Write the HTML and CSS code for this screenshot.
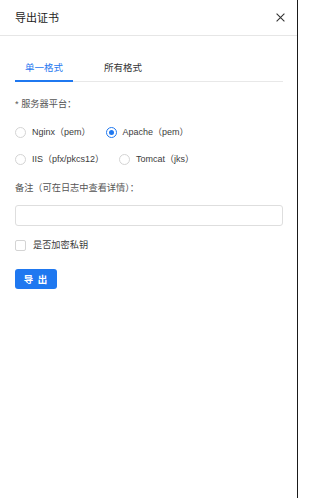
FILE: index.html
```html
<!DOCTYPE html>
<html lang="zh-CN">
<head>
<meta charset="utf-8">
<title>导出证书</title>
<link rel="stylesheet" href="styles.css">
</head>
<body>
<div class="panel">
  <header class="head">
    <span class="title">导出证书</span>
    <span class="close" aria-label="关闭">
      <svg width="9" height="9" viewBox="0 0 9 9"><path d="M0.6 0.6 L8.4 8.4 M8.4 0.6 L0.6 8.4" stroke="#333" stroke-width="1.1" fill="none"/></svg>
    </span>
  </header>
  <div class="body">
    <nav class="tabs">
      <span class="tab active">单一格式</span>
      <span class="tab">所有格式</span>
    </nav>
    <div class="label">* 服务器平台：</div>
    <div class="radios">
      <div class="row">
        <label class="radio"><span class="dot"></span><span>Nginx（pem）</span></label>
        <label class="radio"><span class="dot on"></span><span>Apache（pem）</span></label>
      </div>
      <div class="row">
        <label class="radio"><span class="dot"></span><span>IIS（pfx/pkcs12）</span></label>
        <label class="radio"><span class="dot"></span><span>Tomcat（jks）</span></label>
      </div>
    </div>
    <div class="label note">备注（可在日志中查看详情）：</div>
    <div class="input"></div>
    <label class="check"><span class="box"></span><span>是否加密私钥</span></label>
    <button class="btn">导 出</button>
  </div>
</div>
</body>
</html>
```
FILE: styles.css
```css
html, body {
  margin: 0;
  padding: 0;
  background: #fff;
}
body {
  font-family: "Liberation Sans", "Noto Sans CJK SC", sans-serif;
  color: #444;
  width: 300px;
  height: 498px;
}
.panel {
  width: 298px;
  height: 498px;
  border-right: 1px solid #1a1a1a;
  box-sizing: border-box;
}
.head {
  height: 35px;
  border-bottom: 1px solid #e6e6e6;
  display: flex;
  align-items: center;
  justify-content: space-between;
  padding: 0 12px 0 15px;
}
.title {
  font-size: 11px;
  color: #222;
  line-height: 14px;
  padding-top: 1px;
}
.close {
  display: flex;
  width: 9px;
  height: 9px;
}
.body {
  padding: 0 14px 0 15px;
  display: flex;
  flex-direction: column;
  align-items: flex-start;
}
.tabs {
  margin-top: 19px;
  display: flex;
  gap: 21px;
  border-bottom: 1px solid #e8e8e8;
  align-self: stretch;
}
.tab {
  font-size: 9.5px;
  line-height: 14px;
  padding: 6px 10px 5px;
  width: 38px;
  text-align: center;
  color: #333;
  border-bottom: 2px solid transparent;
  margin-bottom: -1px;
}
.tab.active {
  color: #1f78f0;
  border-bottom-color: #1f78f0;
}
.label {
  font-size: 9.2px;
  line-height: 12px;
  color: #555;
  margin-top: 16px;
}
.radios {
  margin-top: 16px;
  display: flex;
  flex-direction: column;
  gap: 15px;
}
.row {
  display: flex;
  gap: 15px;
}
.radio, .check {
  display: flex;
  align-items: center;
  gap: 6px;
  font-size: 9px;
  line-height: 12px;
  color: #3c3c3c;
}
.dot {
  width: 11px;
  height: 11px;
  box-sizing: border-box;
  border: 1px solid #d4d4d4;
  border-radius: 50%;
  display: flex;
  align-items: center;
  justify-content: center;
}
.dot.on {
  border-color: #1f78f0;
}
.dot.on::after {
  content: "";
  width: 5px;
  height: 5px;
  border-radius: 50%;
  background: #1f78f0;
}
.note {
  margin-top: 17px;
}
.input {
  margin-top: 11px;
  align-self: stretch;
  height: 21px;
  box-sizing: border-box;
  border: 1px solid #dedede;
  border-radius: 3px;
}
.check {
  margin-top: 13px;
  gap: 7px;
  font-size: 9.2px;
}
.box {
  width: 11px;
  height: 11px;
  box-sizing: border-box;
  border: 1px solid #d4d4d4;
  border-radius: 2px;
}
.btn {
  margin-top: 18px;
  width: 42px;
  height: 20px;
  border: none;
  border-radius: 3px;
  background: #1f78f0;
  color: #fff;
  font-family: "Liberation Sans", "Noto Sans CJK SC", sans-serif;
  font-size: 9.5px;
  font-weight: bold;
  padding: 0;
  letter-spacing: 1px;
}
```
